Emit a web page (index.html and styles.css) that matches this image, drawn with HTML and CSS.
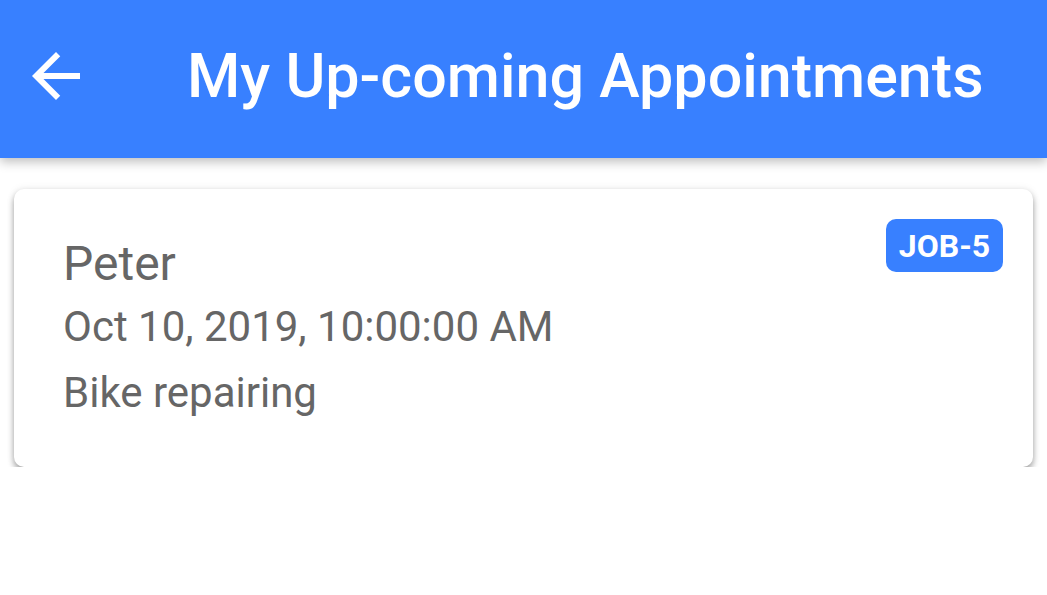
FILE: index.html
```
<!DOCTYPE html>
<html>
<head>
  <title>My Up-coming Appointments</title>
  <link rel="stylesheet" href="styles.css">
</head>
<body>
  <header class="toolbar">
    <button class="back-button" aria-label="Back">
      <svg viewBox="0 0 24 24" width="72" height="72">
        <path fill="#fff" d="M20 11H7.83l5.59-5.59L12 4l-8 8 8 8 1.41-1.41L7.83 13H20v-2z"/>
      </svg>
    </button>
    <h1 class="title">My Up-coming Appointments</h1>
  </header>

  <main class="content">
    <div class="card">
      <span class="badge">JOB-5</span>
      <div class="name">Peter</div>
      <div class="line">Oct 10, 2019, 10:00:00 AM</div>
      <div class="line">Bike repairing</div>
    </div>
  </main>
</body>
</html>
```

FILE: styles.css
```
body {
  margin: 0;
  font-family: Roboto, "Noto Sans", sans-serif;
  background: #fff;
}
.toolbar {
  height: 158px;
  background: #3880ff;
  display: flex;
  align-items: center;
  box-shadow: 0 4px 10px rgba(0, 0, 0, 0.25);
  position: relative;
  z-index: 1;
}
.back-button {
  background: none;
  border: 0;
  padding: 0;
  margin: -6px 0 0 20px;
  width: 72px;
  height: 72px;
}
.back-button svg {
  display: block;
}
.title {
  margin: -6px 0 0 95px;
  color: #fff;
  font-size: 61px;
  font-weight: 500;
  line-height: 1;
}
.content {
  padding: 31px 14px 0;
}
.card {
  position: relative;
  height: 278px;
  box-sizing: border-box;
  padding: 44px 49px 0;
  background: #fff;
  border-radius: 10px;
  box-shadow: 0 4px 6px rgba(0, 0, 0, 0.35), 0 0 8px rgba(0, 0, 0, 0.08);
  color: #666;
}
.name {
  font-size: 48px;
  line-height: 61px;
}
.line {
  font-size: 42px;
  line-height: 66px;
}
.badge {
  position: absolute;
  top: 30px;
  right: 30px;
  width: 117px;
  height: 53px;
  border-radius: 10px;
  background: #3880ff;
  color: #fff;
  font-size: 32px;
  font-weight: 700;
  display: flex;
  align-items: center;
  justify-content: center;
}
```
